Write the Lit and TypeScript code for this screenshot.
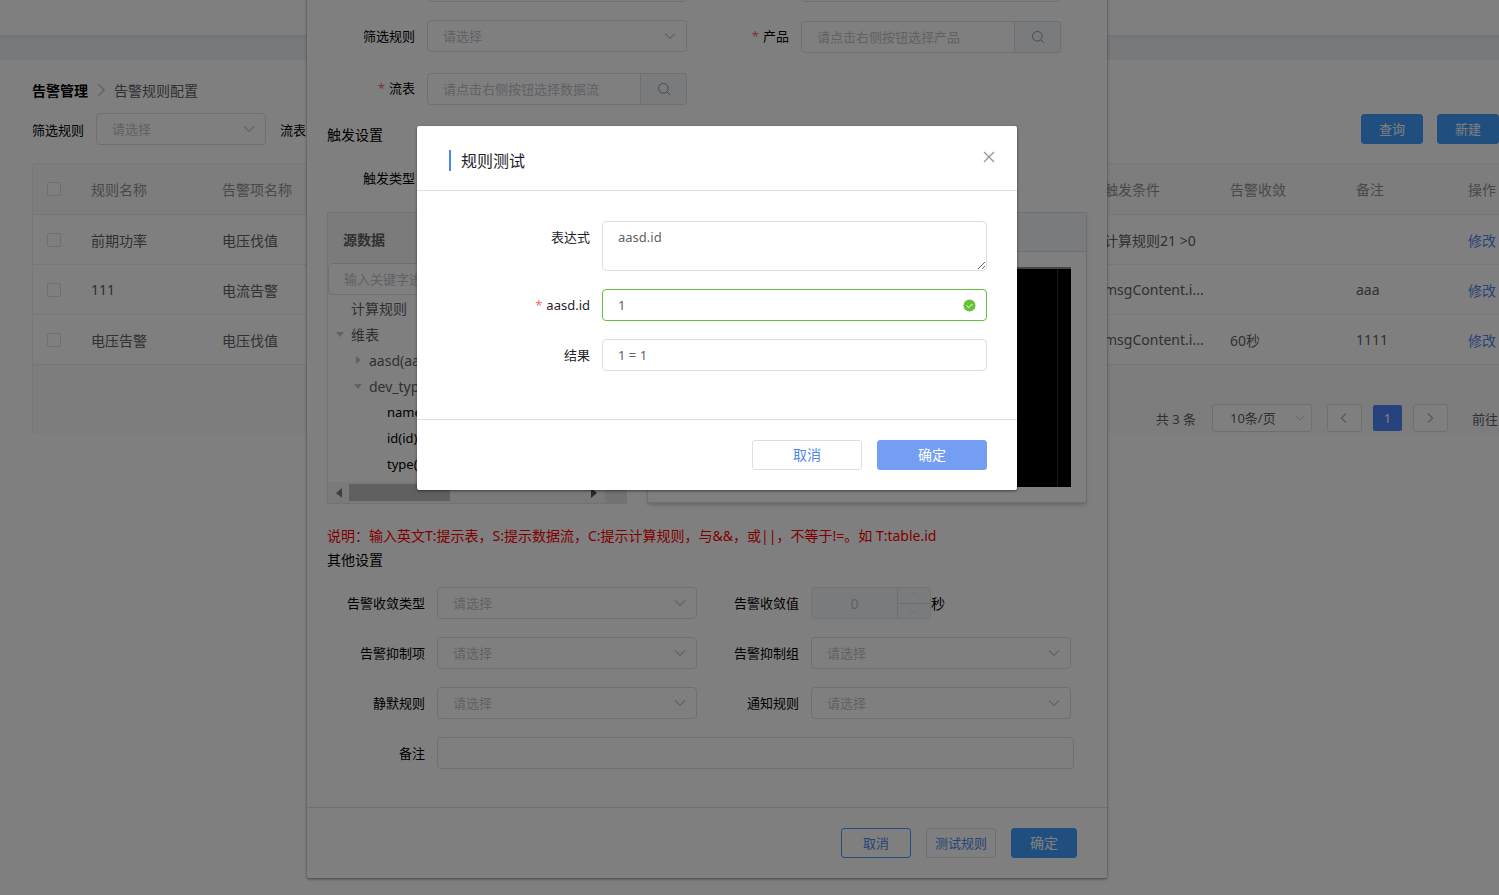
import { LitElement, html, css, svg } from "lit";
import { customElement } from "lit/decorators.js";

const shared = css`
  *,
  *::before,
  *::after {
    box-sizing: border-box;
  }
  :host {
    font-family: "Noto Sans", "Noto Sans CJK SC", sans-serif;
    font-size: 13px;
    color: #000;
  }
  button,
  input,
  select,
  textarea {
    font: inherit;
    margin: 0;
  }
  .input {
    display: block;
    width: 100%;
    height: 32px;
    padding: 0 15px;
    border: 1px solid #dcdfe6;
    border-radius: 4px;
    background: #fff;
    color: #606266;
    outline: none;
    appearance: none;
  }
  .input::placeholder {
    color: #c0c4cc;
    opacity: 1;
  }
  .btn {
    height: 30px;
    padding: 0;
    border: 1px solid #dcdfe6;
    border-radius: 3px;
    background: #fff;
    color: #4f86ee;
    line-height: 28px;
    text-align: center;
  }
  .btn.primary {
    border-color: #409eff;
    background: #409eff;
    color: #fff;
  }
  .btn.outline {
    border-color: #409eff;
  }
`;

const chevron = (d: string, size = 14) => html`
  <svg width=${size} height=${size} viewBox="0 0 14 14" fill="none" stroke="currentColor" stroke-width="1.1" aria-hidden="true">
    ${svg`<path d=${d} />`}
  </svg>
`;
const DOWN = "M2 4.5 7 9.5 12 4.5";
const UP = "M2 9.5 7 4.5 12 9.5";
const LEFT = "M9 2.5 4.5 7 9 11.5";
const RIGHT = "M5 2.5 9.5 7 5 11.5";

@customElement("pick-list")
export class PickList extends LitElement {
  static properties = { label: {}, text: {}, filled: { type: Boolean }, compact: { type: Boolean } };
  declare label: string;
  declare text: string;
  declare filled: boolean;
  declare compact: boolean;

  static styles = [
    shared,
    css`
      :host {
        display: block;
        position: relative;
      }
      select.input {
        padding-right: 30px;
        color: #c0c4cc;
      }
      select.filled {
        color: #606266;
      }
      select.compact {
        height: 28px;
        padding: 0 24px 0 17px;
        border-radius: 3px;
      }
      .arrow {
        position: absolute;
        top: 0;
        bottom: 0;
        right: 10px;
        display: flex;
        align-items: center;
        color: #c0c4cc;
        pointer-events: none;
      }
      .arrow.compact {
        right: 6px;
      }
    `,
  ];

  render() {
    const mods = `${this.filled ? "filled" : ""} ${this.compact ? "compact" : ""}`;
    return html`
      <select class="input ${mods}" aria-label=${this.label}>
        <option>${this.text ?? "请选择"}</option>
      </select>
      <span class="arrow ${mods}">${chevron(DOWN, this.compact ? 12 : 14)}</span>
    `;
  }
}

@customElement("lookup-box")
export class LookupBox extends LitElement {
  static properties = { label: {}, hint: {} };
  declare label: string;
  declare hint: string;

  static styles = [
    shared,
    css`
      :host {
        display: flex;
      }
      .input {
        flex: 1;
        min-width: 0;
        border-radius: 4px 0 0 4px;
      }
      .find {
        display: flex;
        align-items: center;
        justify-content: center;
        width: 46px;
        height: 32px;
        padding: 0;
        border: 1px solid #dcdfe6;
        border-left: 0;
        border-radius: 0 4px 4px 0;
        background: #f5f7fa;
        color: #909399;
      }
    `,
  ];

  render() {
    return html`
      <input class="input" aria-label=${this.label} placeholder=${this.hint} />
      <button class="find" aria-label="搜索">
        <svg width="14" height="14" viewBox="0 0 14 14" fill="none" stroke="currentColor" aria-hidden="true">
          <circle cx="6.3" cy="6.3" r="4.8" />
          <path d="M9.8 9.8 13 13" />
        </svg>
      </button>
    `;
  }
}

interface Rule {
  name: string;
  item: string;
  condition: string;
  converge: string;
  remark: string;
}

const RULES: Rule[] = [
  { name: "前期功率", item: "电压伐值", condition: "计算规则21 >0", converge: "", remark: "" },
  { name: "111", item: "电流告警", condition: "msgContent.i...", converge: "", remark: "aaa" },
  { name: "电压告警", item: "电压伐值", condition: "msgContent.i...", converge: "60秒", remark: "1111" },
];

@customElement("rule-page")
export class RulePage extends LitElement {
  static styles = [
    shared,
    css`
      :host {
        display: block;
      }
      .topbar {
        height: 35px;
        background: #fff;
      }
      .band {
        height: 25px;
        background: linear-gradient(#e4e6ea, #eff2f6 5px);
      }
      .content {
        padding: 19px 0 0 32px;
      }
      .crumbs {
        display: flex;
        align-items: center;
        gap: 4px;
        height: 22px;
        font-size: 14px;
        color: #606266;
      }
      .crumbs b {
        color: #000;
      }
      .crumbs svg {
        color: #c0c4cc;
      }
      .filters {
        display: flex;
        align-items: center;
        height: 32px;
        margin-top: 12px;
      }
      .filters pick-list {
        width: 170px;
        margin: 0 14px 0 12px;
      }
      .actions {
        display: flex;
        gap: 14px;
        margin-left: auto;
      }
      .actions .btn {
        width: 62px;
      }
      .list {
        margin-top: 18px;
        border-left: 1px solid #ebeef5;
        border-top: 1px solid #ebeef5;
        border-top-left-radius: 4px;
        background: #fafafa;
      }
      table {
        width: 100%;
        table-layout: fixed;
        border-collapse: separate;
        border-spacing: 0;
        font-size: 14px;
        color: #606266;
      }
      th,
      td {
        height: 50px;
        padding: 0 0 0 15px;
        border-bottom: 1px solid #ebeef5;
        text-align: left;
        font-weight: 400;
        white-space: nowrap;
      }
      td {
        background: #fff;
      }
      th {
        height: 51px;
        color: #909399;
      }
      .pick,
      td.pick {
        padding-left: 14px;
      }
      .c-pick {
        width: 43px;
      }
      .c-name {
        width: 131px;
      }
      .c-std {
        width: 126px;
      }
      .c-remark {
        width: 112px;
      }
      .c-ops {
        width: 46px;
      }
      .tick {
        display: block;
        width: 14px;
        height: 14px;
        margin: 0;
        appearance: none;
        border: 1px solid #dcdfe6;
        border-radius: 2px;
        background: #fff;
      }
      a {
        color: #4f86ee;
        text-decoration: none;
      }
      .pager {
        display: flex;
        align-items: center;
        justify-content: flex-end;
        padding: 39px 1px 2px 0;
        color: #606266;
      }
      .pager pick-list {
        width: 100px;
        margin: 0 15px 0 16px;
      }
      .step {
        display: flex;
        align-items: center;
        justify-content: center;
        width: 35px;
        height: 28px;
        padding: 0;
        border: 1px solid #dcdfe6;
        border-radius: 3px;
        background: #fff;
        color: #a8abb2;
      }
      .current {
        width: 29px;
        height: 26px;
        margin: 0 11px;
        padding: 0;
        border: 0;
        border-radius: 2px;
        background: #4f86fa;
        color: #fff;
      }
      .jump {
        margin-left: 24px;
      }
    `,
  ];

  render() {
    return html`
      <header class="topbar"></header>
      <div class="band"></div>
      <main class="content">
        <nav class="crumbs">
          <b>告警管理</b>${chevron(RIGHT, 18)}<span>告警规则配置</span>
        </nav>
        <div class="filters">
          <span>筛选规则</span>
          <pick-list label="筛选规则"></pick-list>
          <span>流表</span>
          <div class="actions">
            <button class="btn primary">查询</button>
            <button class="btn primary">新建</button>
          </div>
        </div>
        <section class="list">
          <table>
            <colgroup>
              <col class="c-pick" />
              <col class="c-name" />
              <col />
              <col class="c-std" />
              <col class="c-std" />
              <col class="c-remark" />
              <col class="c-ops" />
            </colgroup>
            <thead>
              <tr>
                <th class="pick"><input class="tick" type="checkbox" aria-label="全选" /></th>
                <th>规则名称</th>
                <th>告警项名称</th>
                <th>触发条件</th>
                <th>告警收敛</th>
                <th>备注</th>
                <th>操作</th>
              </tr>
            </thead>
            <tbody>
              ${RULES.map(
                (r) => html`
                  <tr>
                    <td class="pick"><input class="tick" type="checkbox" aria-label=${r.name} /></td>
                    <td>${r.name}</td>
                    <td>${r.item}</td>
                    <td>${r.condition}</td>
                    <td>${r.converge}</td>
                    <td>${r.remark}</td>
                    <td><a href="#">修改</a></td>
                  </tr>
                `
              )}
            </tbody>
          </table>
          <div class="pager">
            <span>共 3 条</span>
            <pick-list label="每页条数" text="10条/页" filled compact></pick-list>
            <button class="step" aria-label="上一页">${chevron(LEFT)}</button>
            <button class="current">1</button>
            <button class="step" aria-label="下一页">${chevron(RIGHT)}</button>
            <span class="jump">前往</span>
          </div>
        </section>
      </main>
    `;
  }
}

interface TreeNode {
  text: string;
  depth: number;
  state?: "open" | "closed";
  leaf?: boolean;
}

const TREE: TreeNode[] = [
  { text: "计算规则", depth: 0 },
  { text: "维表", depth: 0, state: "open" },
  { text: "aasd(aasd)", depth: 1, state: "closed" },
  { text: "dev_type(dev_type)", depth: 1, state: "open" },
  { text: "name(name)", depth: 2, leaf: true },
  { text: "id(id)", depth: 2, leaf: true },
  { text: "type(type)", depth: 2, leaf: true },
];

@customElement("rule-editor")
export class RuleEditor extends LitElement {
  static styles = [
    shared,
    css`
      :host {
        display: block;
        border-radius: 2px;
        background: #fff;
        box-shadow: 0 1px 3px rgba(0, 0, 0, 0.5);
      }
      .body {
        padding: 20px 20px 38px;
      }
      .form {
        display: grid;
        row-gap: 18px;
        justify-content: start;
        align-items: start;
      }
      .base {
        grid-template-columns: 100px 260px 114px 260px;
        grid-auto-rows: minmax(34px, auto);
      }
      .base > .input {
        align-self: end;
      }
      .other {
        grid-template-columns: 110px 260px 114px 260px 3px;
        margin-top: 15px;
      }
      .label {
        padding-right: 12px;
        line-height: 32px;
        text-align: right;
      }
      .label.required::before {
        content: "*";
        margin-right: 4px;
        color: #f56c6c;
      }
      lookup-box {
        margin-top: 1px;
      }
      .heading {
        margin: 0;
        font-size: 14px;
        font-weight: 400;
        line-height: 24px;
      }
      .trigger {
        margin-top: 17px;
      }
      .kind {
        margin: 15px 0 16px;
      }
      .panels {
        display: flex;
        align-items: flex-start;
        gap: 20px;
      }
      .source {
        width: 300px;
        height: 292px;
        border: 1px solid #e4e4e4;
        overflow: hidden;
      }
      .source-title {
        margin: 0;
        height: 50px;
        padding: 4px 15px 0;
        background: #f7f7f7;
        color: #606266;
        font-size: 14px;
        line-height: 46px;
      }
      .tree {
        margin: 0;
        padding: 0;
        height: 187px;
        list-style: none;
        font-size: 14px;
        color: #606266;
      }
      .node {
        display: flex;
        align-items: center;
        height: 26px;
      }
      .node.d1 {
        padding-left: 18px;
      }
      .node.d2 {
        padding-left: 36px;
      }
      .node.leaf {
        color: #000;
        font-size: 13px;
      }
      .caret {
        display: flex;
        justify-content: center;
        width: 23px;
        color: #c0c4cc;
      }
      .scroll {
        display: grid;
        grid-template-columns: 21px 101px 1fr 22px 21px;
        align-items: center;
        height: 21px;
        background: #f5f5f5;
        color: #505050;
      }
      .scroll svg {
        justify-self: center;
      }
      .thumb {
        height: 17px;
        background: #c1c1c1;
      }
      .corner {
        grid-column: 5;
        height: 21px;
        background: #e4e4e4;
      }
      .rule {
        flex: 1;
        height: 291px;
        border: 1px solid #dcdfe6;
        box-shadow: 0 3px 4px -1px rgba(0, 0, 0, 0.2);
      }
      .rule-title {
        height: 39px;
        border-bottom: 1px solid #dcdfe6;
        background: #f5f7fa;
      }
      .code {
        height: 220px;
        margin: 15px;
        padding-right: 13px;
        border-top: 2px solid #8c8c8c;
        background: #000;
      }
      .code-area {
        height: 100%;
        border-right: 1px solid #333;
      }
      .note {
        margin: 20px 0 0;
        color: #f00;
        font-size: 14px;
        line-height: 24px;
      }
      .wide {
        grid-column: 2 / 6;
      }
      .stepper {
        display: flex;
        align-items: center;
        font-size: 14px;
      }
      .stepper .input {
        width: 87px;
        border-color: #e4e7ed;
        border-right-color: #dcdfe6;
        border-radius: 4px 0 0 4px;
        background: #f5f7fa;
        color: #c0c4cc;
        text-align: center;
      }
      .spin {
        display: grid;
        width: 33px;
        height: 32px;
      }
      .spin button {
        display: flex;
        align-items: center;
        justify-content: center;
        padding: 0;
        border: 1px solid #e4e7ed;
        border-left: 0;
        border-radius: 0 4px 0 0;
        background: #f5f7fa;
        color: #dcdfe6;
      }
      .spin button + button {
        border-top: 0;
        border-radius: 0 0 4px 0;
      }
      .spin button:first-child {
        border-bottom-color: #dcdfe6;
      }
      .footer {
        display: flex;
        justify-content: flex-end;
        gap: 15px;
        padding: 20px 30px;
        border-top: 1px solid #dcdfe6;
      }
      .footer .btn {
        width: 70px;
      }
      .footer .primary {
        width: 66px;
        font-size: 14px;
      }
    `,
  ];

  private caret(state?: string) {
    if (!state) return html`<span class="caret"></span>`;
    const d = state === "open" ? "M0 2h8L4 7z" : "M2 0v8l5-4z";
    return html`<span class="caret"><svg width="8" height="8" fill="currentColor" aria-hidden="true"><path d=${d} /></svg></span>`;
  }

  private row(left: string, right: string) {
    return html`
      <span class="label">${left}</span><pick-list label=${left}></pick-list>
      <span class="label">${right}</span><pick-list label=${right}></pick-list>
    `;
  }

  render() {
    return html`
      <div class="body">
        <div class="form base">
          <span></span><input class="input" aria-label="规则名称" />
          <span></span><input class="input" aria-label="告警项名称" />
          <span class="label">筛选规则</span><pick-list label="筛选规则"></pick-list>
          <span class="label required">产品</span>
          <lookup-box label="产品" hint="请点击右侧按钮选择产品"></lookup-box>
          <span class="label required">流表</span>
          <lookup-box label="流表" hint="请点击右侧按钮选择数据流"></lookup-box>
        </div>
        <h3 class="heading trigger">触发设置</h3>
        <div class="form base kind">
          <span class="label">触发类型</span><pick-list label="触发类型"></pick-list>
        </div>
        <div class="panels">
          <section class="source">
            <h4 class="source-title">源数据</h4>
            <input class="input" aria-label="源数据" placeholder="输入关键字进行过滤" />
            <ul class="tree">
              ${TREE.map(
                (n) => html`<li class="node d${n.depth} ${n.leaf ? "leaf" : ""}">${this.caret(n.state)}${n.text}</li>`
              )}
            </ul>
            <div class="scroll">
              <svg width="6" height="10" fill="#808080" aria-hidden="true"><path d="M6 0v10L0 5z" /></svg>
              <span class="thumb"></span>
              <span></span>
              <svg width="6" height="10" fill="currentColor" aria-hidden="true"><path d="M0 0v10l6-5z" /></svg>
              <span class="corner"></span>
            </div>
          </section>
          <section class="rule">
            <div class="rule-title"></div>
            <div class="code"><div class="code-area"></div></div>
          </section>
        </div>
        <p class="note">说明：输入英文T:提示表，S:提示数据流，C:提示计算规则，与&&，或||，不等于!=。如 T:table.id</p>
        <h3 class="heading">其他设置</h3>
        <div class="form other">
          <span class="label">告警收敛类型</span><pick-list label="告警收敛类型"></pick-list>
          <label class="label" for="span">告警收敛值</label>
          <div class="stepper">
            <input class="input" id="span" value="0" disabled />
            <span class="spin">
              <button aria-label="增加" disabled>${chevron(UP, 12)}</button>
              <button aria-label="减少" disabled>${chevron(DOWN, 12)}</button>
            </span>
            秒
          </div>
          <span></span>
          ${this.row("告警抑制项", "告警抑制组")}<span></span>
          ${this.row("静默规则", "通知规则")}<span></span>
          <label class="label" for="remark">备注</label><input class="input wide" id="remark" />
        </div>
      </div>
      <footer class="footer">
        <button class="btn outline">取消</button>
        <button class="btn">测试规则</button>
        <button class="btn primary">确定</button>
      </footer>
    `;
  }
}

@customElement("rule-test")
export class RuleTest extends LitElement {
  static styles = [
    shared,
    css`
      :host {
        display: block;
        border-radius: 2px;
        background: #fff;
        box-shadow: 0 1px 3px rgba(0, 0, 0, 0.5);
      }
      .header {
        display: flex;
        align-items: flex-start;
        justify-content: space-between;
        height: 65px;
        padding: 24px 22px 0 32px;
        border-bottom: 1px solid #dcdfe6;
      }
      .title {
        margin: 0;
        height: 21px;
        padding-left: 10px;
        border-left: 2px solid #4f86ee;
        font-size: 16px;
        font-weight: 400;
        line-height: 23px;
        color: #1f2329;
      }
      .close {
        display: flex;
        width: 12px;
        height: 14px;
        padding: 0;
        border: 0;
        background: none;
        color: #909399;
      }
      .fields {
        display: grid;
        grid-template-columns: 155px 1fr;
        row-gap: 18px;
        padding: 30px 30px 48px;
      }
      .label {
        padding-right: 12px;
        line-height: 32px;
        text-align: right;
        color: #1f2329;
      }
      .label.required::before {
        content: "*";
        margin-right: 4px;
        color: #f56c6c;
      }
      textarea.input {
        height: 50px;
        padding: 5px 15px;
        line-height: 20px;
        resize: vertical;
      }
      .valid {
        position: relative;
      }
      .valid .input {
        border-color: #67c23a;
      }
      .valid svg {
        position: absolute;
        top: 10px;
        right: 11px;
      }
      .footer {
        display: flex;
        justify-content: flex-end;
        gap: 15px;
        padding: 20px 30px;
        border-top: 1px solid #dcdfe6;
      }
      .footer .btn {
        width: 110px;
        font-size: 14px;
      }
      .footer .primary {
        border-color: #739ef1;
        background: #739ef1;
      }
    `,
  ];

  render() {
    return html`
      <header class="header">
        <h2 class="title">规则测试</h2>
        <button class="close" aria-label="关闭">
          <svg width="12" height="14" viewBox="0 0 12 14" fill="none" stroke="currentColor" stroke-width="1.2" aria-hidden="true">
            <path d="M1 2 11 12M11 2 1 12" />
          </svg>
        </button>
      </header>
      <div class="fields">
        <label class="label" for="expr">表达式</label>
        <textarea class="input" id="expr" .value=${"aasd.id"}></textarea>
        <label class="label required" for="arg">aasd.id</label>
        <div class="valid">
          <input class="input" id="arg" value="1" />
          <svg width="13" height="13" viewBox="0 0 13 13" aria-hidden="true">
            <circle cx="6.5" cy="6.5" r="6" fill="#67c23a" />
            <path d="M3.7 6.6 5.8 8.6 9.4 4.9" fill="none" stroke="#fff" />
          </svg>
        </div>
        <label class="label" for="result">结果</label>
        <input class="input" id="result" value="1 = 1" />
      </div>
      <footer class="footer">
        <button class="btn">取消</button>
        <button class="btn primary">确定</button>
      </footer>
    `;
  }
}

@customElement("app-root")
export class AppRoot extends LitElement {
  static styles = css`
    :host {
      display: block;
      position: relative;
      min-height: 100vh;
      overflow: hidden;
      background: #fff;
    }
    .layer {
      position: absolute;
      inset: 0;
      display: flex;
      justify-content: center;
      align-items: flex-start;
    }
    .editor-layer {
      top: -52px;
      padding-right: 85px;
    }
    .test-layer {
      padding: 126px 65px 0 0;
      background: rgba(0, 0, 0, 0.5);
    }
    rule-editor {
      width: 800px;
    }
    rule-test {
      width: 600px;
    }
  `;

  render() {
    return html`
      <rule-page></rule-page>
      <div class="layer editor-layer"><rule-editor></rule-editor></div>
      <div class="layer test-layer"><rule-test></rule-test></div>
    `;
  }
}
